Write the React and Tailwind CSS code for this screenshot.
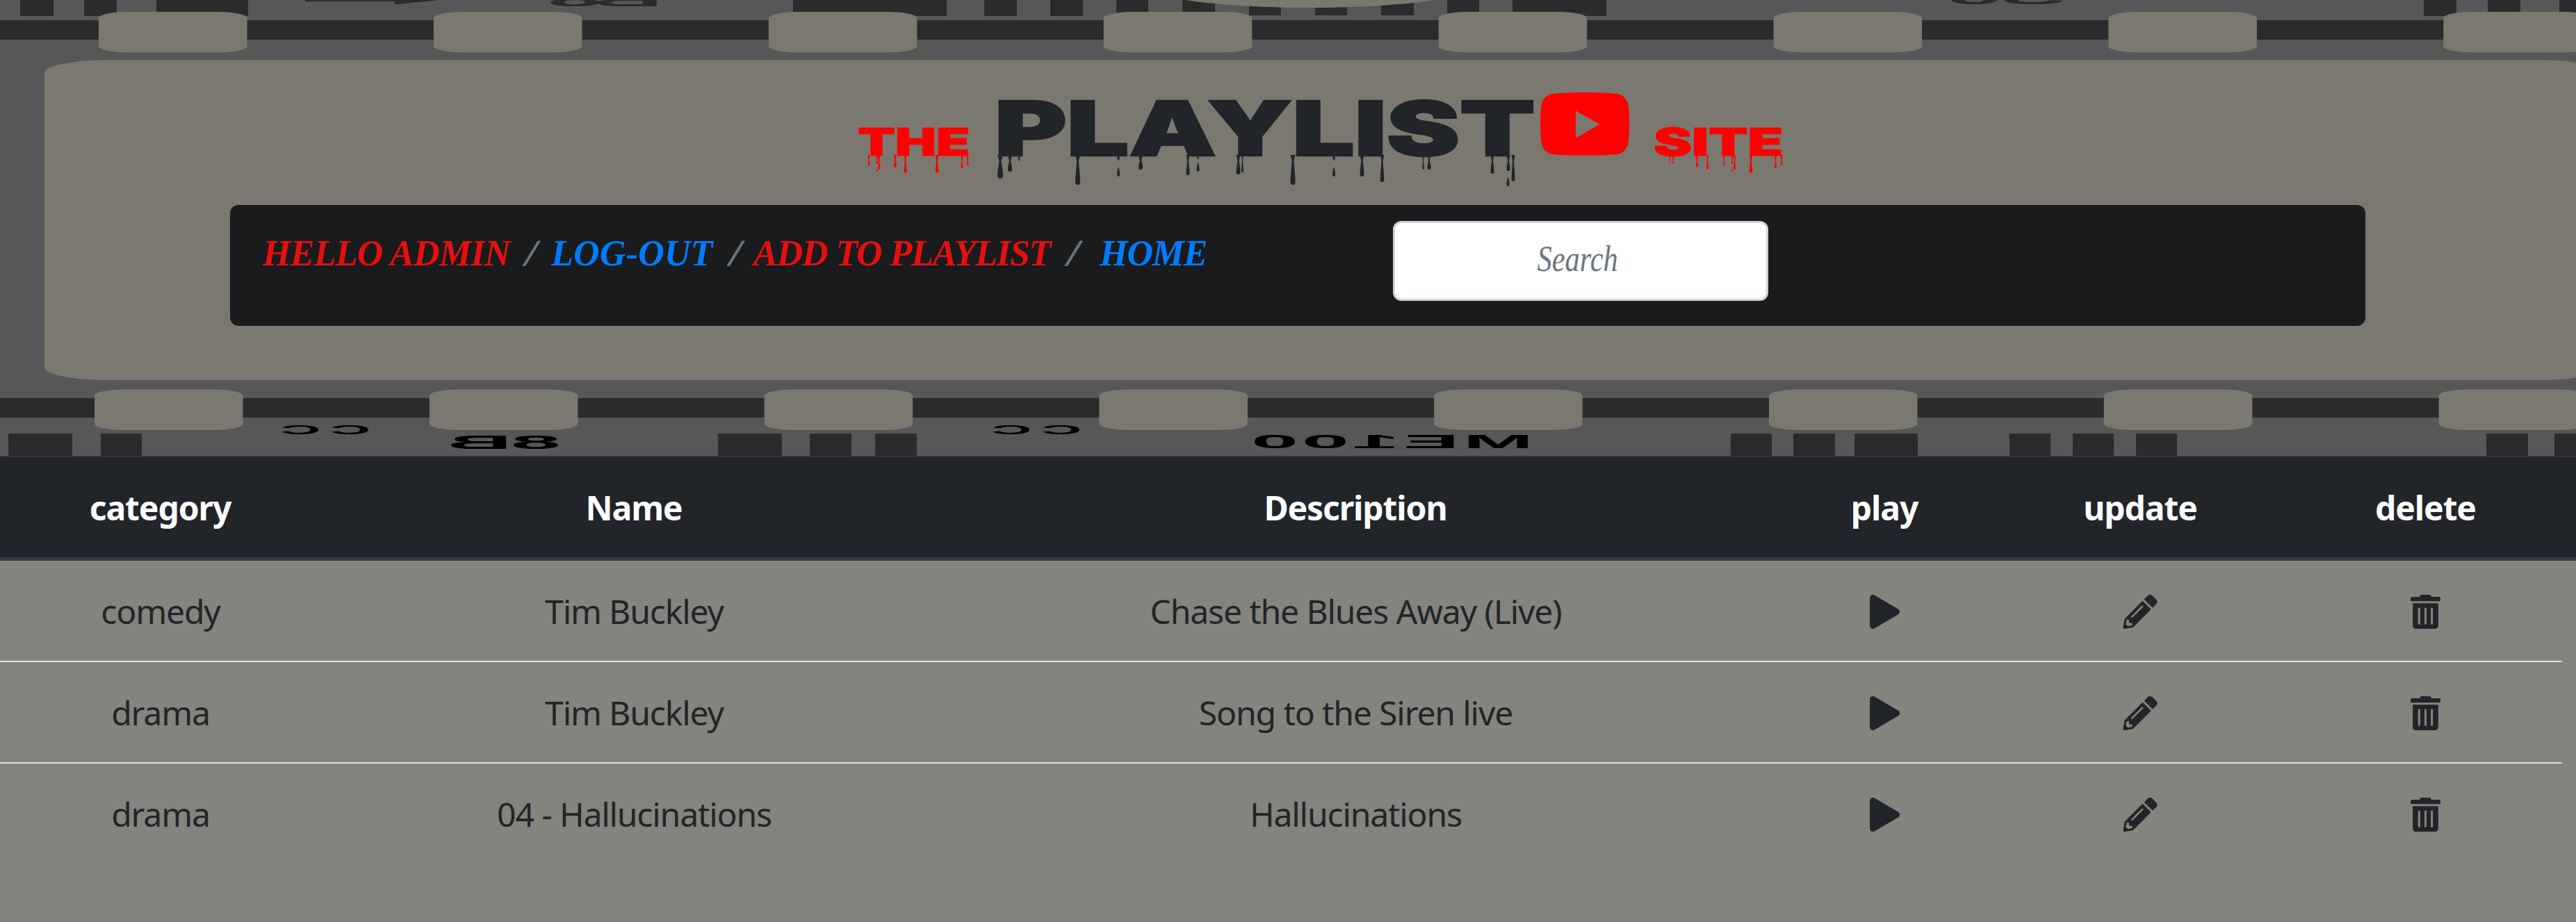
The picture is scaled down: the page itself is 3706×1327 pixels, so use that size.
import React from "react";
import { FaPlay, FaPencilAlt } from "react-icons/fa";

const range = (n) => Array.from({ length: n }, (_, i) => i);

const TOP_BARS = [
  [29, 48], [121, 47], [225, 132], [1141, 221], [1416, 47], [1511, 47], [1606, 46],
  [1701, 47], [1797, 46], [1892, 46], [1987, 47], [2082, 46], [2176, 135],
  [3487, 47], [3579, 47], [3682, 60],
];
const BOTTOM_BARS = [
  [12, 92], [145, 59], [1033, 92], [1165, 60], [1259, 60], [2490, 59], [2580, 60],
  [2668, 91], [2891, 59], [2982, 59], [3073, 59], [3577, 60], [3675, 60],
];

/* Text that reads right-to-left on the back of the film, fitted to its box. */
function Mirrored({ x, y, width, size, stretch, fill, children }) {
  return (
    <text
      transform={`translate(${x + width} ${y}) scale(${-stretch} 1)`}
      fontFamily="'Liberation Sans', sans-serif"
      fontWeight="700"
      fontSize={size}
      textLength={width / stretch}
      lengthAdjust="spacing"
      fill={fill}
    >
      {children}
    </text>
  );
}

function FilmStrip() {
  return (
    <svg className="absolute inset-0 h-[656px] w-[3706px]" viewBox="0 0 3706 656" aria-hidden="true">
      <rect width="3706" height="656" fill="#575757" />
      <g fill="#2b2b2b">
        {TOP_BARS.map(([x, w]) => (
          <rect key={x} x={x} y="0" width={w} height={x > 1750 && x < 2000 ? 22 : 23} />
        ))}
        {BOTTOM_BARS.map(([x, w]) => (
          <rect key={x} x={x} y="624" width={w} height="32" />
        ))}
        <rect x="0" y="29" width="3706" height="28" />
        <rect x="0" y="573" width="3706" height="28" />
        <path d="M439 0H632L568 6.5V2H439Z" />
      </g>
      <Mirrored x={788} y={9} width={166} size={27} stretch={5.2} fill="#2b2b2b">B8</Mirrored>
      <Mirrored x={2802} y={6} width={170} size={27} stretch={5.2} fill="#2b2b2b">S6</Mirrored>
      <g fill="#7b786f">
        <ellipse cx="1885" cy="-20" rx="236" ry="31" />
        {range(8).map((i) => (
          <rect key={i} x={142 + i * 481.9} y="17" width="213.5" height="58.5" rx="42" ry="9" />
        ))}
        {range(8).map((i) => (
          <rect key={i} x={136 + i * 481.8} y="560.5" width="213.5" height="58.5" rx="42" ry="9" />
        ))}
        <rect x="64" y="86.5" width="3680" height="460.5" rx="92" ry="18" />
      </g>
      <Mirrored x={403} y={625} width={130} size={17.5} stretch={4.6} fill="#000">CC</Mirrored>
      <Mirrored x={1426} y={625} width={130} size={17.5} stretch={4.6} fill="#000">CC</Mirrored>
      <Mirrored x={643} y={646} width={164} size={27} stretch={4.8} fill="#000">8B</Mirrored>
      <Mirrored x={1800} y={645} width={406} size={27} stretch={4.5} fill="#000">ME100</Mirrored>
    </svg>
  );
}

/* Drips under the title: [x, width of the drop, bottom] */
const DARK_DRIPS = [
  [1439, 8, 257], [1453, 6, 247], [1466, 3, 231], [1550.5, 7, 266], [1609, 4, 230], [1641, 6, 244],
  [1709, 5, 252], [1723.5, 3, 229], [1781.5, 6, 251], [1787.5, 3, 248], [1860, 7, 266],
  [1919, 4, 230], [1959.5, 6, 254], [1988.5, 5.5, 262], [2047.5, 2.5, 244], [2056, 5, 244],
  [2147, 5, 250], [2170, 5, 246], [2177, 5, 261],
];
const RED_DRIPS = [
  [1250, 3, 238], [1262, 3, 236], [1265, 3, 244], [1288, 4, 241], [1302.5, 4, 249],
  [1348, 4.5, 249], [1384, 3, 242], [1392, 3, 238], [2402.5, 1.5, 235], [2407, 2.5, 235],
  [2441.5, 3.5, 240], [2456.5, 3, 244], [2480, 2.5, 238], [2492, 2.5, 236], [2495.5, 3, 244],
  [2519, 4.5, 249], [2554.5, 3, 242], [2563, 3, 238],
];
const DROPS = [[1609, 254], [1723.5, 247], [1919, 254], [2169.5, 268]];
const RED_DROPS = [[1262, 247], [2492, 247]];

function drip([x, w, b]) {
  const h = w / 2;
  const n = w / 5;
  return `M${x - h} 223H${x + h}Q${x + n} 230 ${x + n} 233Q${x + h} ${b - w * 1.6} ${x + h} ${b - w / 2}Q${x + h} ${b} ${x} ${b}Q${x - h} ${b} ${x - h} ${b - w / 2}Q${x - h} ${b - w * 1.6} ${x - n} 233Q${x - n} 230 ${x - h} 223Z`;
}

function Drips() {
  return (
    <svg className="pointer-events-none absolute left-0 top-0 h-[295px] w-[3706px]" viewBox="0 0 3706 295" aria-hidden="true">
      <g fill="#212529">
        <path d={DARK_DRIPS.map(drip).join("")} />
        {DROPS.map(([x, b]) => (
          <path key={x} d={`M${x} ${b - 14}Q${x + 4} ${b} ${x} ${b}Q${x - 4} ${b} ${x} ${b - 14}Z`} />
        ))}
      </g>
      <g fill="#ff0000">
        <path d={RED_DRIPS.map(drip).join("")} />
        {RED_DROPS.map(([x, b]) => (
          <path key={x} d={`M${x} ${b - 8}L${x + 1} ${b}H${x - 1}Z`} />
        ))}
      </g>
    </svg>
  );
}

function TrashIcon({ className }) {
  return (
    <svg className={className} viewBox="0 0 448 512" fill="currentColor" aria-hidden="true">
      <path d="M0 84V56c0-13.300 10.700-24 24-24h112l9.400-18.700c4-8.200 12.300-13.300 21.400-13.300h114.300c9.100 0 17.400 5.100 21.500 13.300L312 32h112c13.300 0 24 10.700 24 24v28c0 6.600-5.400 12-12 12H12C5.400 96 0 90.600 0 84zm416 56v324c0 26.500-21.500 48-48 48H80c-26.500 0-48-21.500-48-48V140c0-6.600 5.400-12 12-12h360c6.600 0 12 5.400 12 12zm-272 68c0-8.800-7.200-16-16-16s-16 7.200-16 16v224c0 8.800 7.200 16 16 16s16-7.200 16-16V208zm96 0c0-8.800-7.200-16-16-16s-16 7.200-16 16v224c0 8.800 7.200 16 16 16s16-7.200 16-16V208zm96 0c0-8.800-7.200-16-16-16s-16 7.200-16 16v224c0 8.800 7.200 16 16 16s16-7.200 16-16V208z" />
    </svg>
  );
}

function Title() {
  return (
    <h1 className="relative flex h-[295px] items-baseline whitespace-nowrap pl-[1234px] pt-[131px] font-['Inter',sans-serif] font-black leading-none">
      <span className="w-[197px] text-[55px] text-[#ff0000] [-webkit-text-stroke:1.2px_#ff0000]">
        <span className="inline-block origin-left scale-x-[1.43]">THE</span>
      </span>
      <span className="w-[785px] text-[108px] text-[#212529] [-webkit-text-stroke:2.6px_#212529]">
        <span className="inline-block origin-left scale-x-[1.464]">PLAYLIST</span>
      </span>
      <svg className="h-[91px] w-[128px]" viewBox="0 0 128 91" aria-label="YouTube">
        <path
          fillRule="evenodd"
          fill="#ff0000"
          d="M64 0C84 0 104 1 111 2C119 3.500 125 10 126.500 18C128.500 34 128.500 57 126.500 73C125 81 119 88 111 89C96 91.400 32 91.400 17 89C9 88 3 81 1.500 73C-.5 57-.5 34 1.500 18C3 10 9 3.500 17 2C24 1 44 0 64 0ZM51 26.500V65.500L85.500 46Z"
        />
      </svg>
      <span className="ml-[35px] text-[55px] text-[#ff0000] [-webkit-text-stroke:1.2px_#ff0000]">
        <span className="inline-block origin-left scale-x-[1.5]">SITE</span>
      </span>
      <Drips />
    </h1>
  );
}

function Slash() {
  return (
    <span className="inline-block origin-left translate-x-[1px] scale-x-[1.2] font-normal text-[#6c757d] [-webkit-text-stroke:1px_#6c757d]">
      /
    </span>
  );
}

function Navbar() {
  return (
    <nav className="relative ml-[331px] flex h-[174px] w-[3072px] items-start rounded-[12px] bg-[#191b1c] pl-[47px]">
      <div className="flex w-[1626px] whitespace-nowrap pt-[44px] font-['Liberation_Serif',serif] text-[52px] font-bold italic leading-none text-[#e60f0f]">
        <span className="w-[376px] tracking-[-0.7px]">HELLO ADMIN</span>
        <span className="w-[39px]"><Slash /></span>
        <a className="w-[255px] tracking-[0.2px] text-[#007bff]">LOG-OUT</a>
        <span className="w-[36px]"><Slash /></span>
        <a className="w-[450px] tracking-[-1.1px]">ADD TO PLAYLIST</a>
        <span className="w-[48px]"><Slash /></span>
        <a className="tracking-[-1.2px] text-[#007bff]">HOME</a>
      </div>
      <div className="mt-[23px] flex h-[115px] w-[540px] justify-center rounded-[12px] border-[3px] border-[#ced4da] bg-white pr-[8px] pt-[25px] font-['Liberation_Serif',serif] text-[53px] italic leading-none text-[#6c757d]">
        <span className="inline-block scale-x-[0.8]">Search</span>
      </div>
    </nav>
  );
}

const COLUMNS = "grid grid-cols-[461px_902px_1174px_348px_388px_433px] justify-items-center";
const HEADINGS = ["category", "Name", "Description", "play", "update", "delete"];
const ROWS = [
  ["comedy", "Tim Buckley", "Chase the Blues Away (Live)"],
  ["drama", "Tim Buckley", "Song to the Siren live"],
  ["drama", "04 - Hallucinations", "Hallucinations"],
];

export default function App() {
  return (
    <div className="h-[1327px] w-[3706px] overflow-hidden bg-[#85837d]">
      <header className="relative h-[656px]">
        <FilmStrip />
        <Title />
        <Navbar />
      </header>
      <main className="whitespace-nowrap font-['Noto_Sans',sans-serif] text-[48px] leading-none tracking-[-1.1px] text-[#212529]">
        <div className={`${COLUMNS} h-[151px] border-b-[5px] border-t-2 border-b-[#32383e] border-t-[#32383e] bg-[#212529] pt-[49px] font-bold text-white`}>
          {HEADINGS.map((h) => (
            <span key={h}>{h}</span>
          ))}
        </div>
        {ROWS.map(([category, name, description], i) => (
          <div
            key={i}
            className={`${COLUMNS} h-[146px] w-[3686px] pt-[49px] ${i < 2 ? "border-b-2 border-[#dee2e6]" : ""}`}
          >
            <span className="pl-px">{category}</span>
            <span className="pl-px">{name}</span>
            <span className="pl-px">{description}</span>
            <FaPlay className="h-[49px] w-[43px]" />
            <FaPencilAlt className="h-[49px] w-[50px]" />
            <TrashIcon className="h-[49px] w-[43px]" />
          </div>
        ))}
      </main>
    </div>
  );
}
